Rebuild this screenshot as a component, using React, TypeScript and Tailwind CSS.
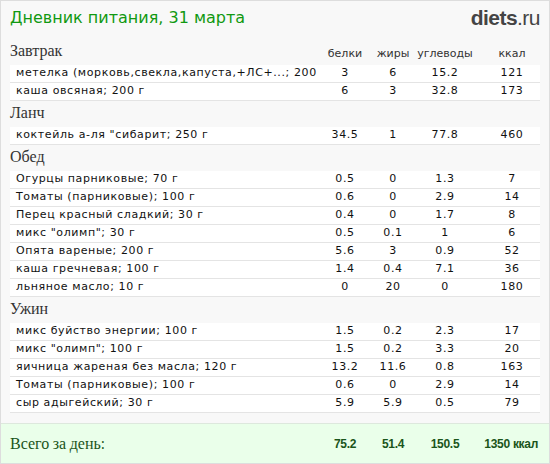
const sections: { title: string; rows: [string, string, string, string, string][] }[] = [
  {
    title: 'Завтрак',
    rows: [
      ['метелка (морковь,свекла,капуста,+ЛС+...; 200 г', '3', '6', '15.2', '121'],
      ['каша овсяная; 200 г', '6', '3', '32.8', '173'],
    ],
  },
  { title: 'Ланч', rows: [['коктейль а-ля "сибарит; 250 г', '34.5', '1', '77.8', '460']] },
  {
    title: 'Обед',
    rows: [
      ['Огурцы парниковые; 70 г', '0.5', '0', '1.3', '7'],
      ['Томаты (парниковые); 100 г', '0.6', '0', '2.9', '14'],
      ['Перец красный сладкий; 30 г', '0.4', '0', '1.7', '8'],
      ['микс "олимп"; 30 г', '0.5', '0.1', '1', '6'],
      ['Опята вареные; 200 г', '5.6', '3', '0.9', '52'],
      ['каша гречневая; 100 г', '1.4', '0.4', '7.1', '36'],
      ['льняное масло; 10 г', '0', '20', '0', '180'],
    ],
  },
  {
    title: 'Ужин',
    rows: [
      ['микс буйство энергии; 100 г', '1.5', '0.2', '2.3', '17'],
      ['микс "олимп"; 100 г', '1.5', '0.2', '3.3', '20'],
      ['яичница жареная без масла; 120 г', '13.2', '11.6', '0.8', '163'],
      ['Томаты (парниковые); 100 г', '0.6', '0', '2.9', '14'],
      ['сыр адыгейский; 30 г', '5.9', '5.9', '0.5', '79'],
    ],
  },
];

export default function App() {
  return (
    <div className="w-[550px] h-[464px] bg-[#f8f8f8] border border-[#dddddd] flex flex-col overflow-hidden font-[DejaVu_Sans]">
      <div className="flex justify-between items-center px-[9px] pt-[4px] h-[30px]">
        <span className="text-[#119911] text-[16px]">Дневник питания, 31 марта</span>
        <span className="text-[#444] text-[21px] font-[Liberation_Sans] tracking-tight">
          <b>diets</b>.ru
        </span>
      </div>
      <div className="flex-1 px-[9px] pt-[12px]">
        {sections.map((s, i) => (
          <div key={s.title}>
            <div className={`flex items-end pb-[2px] ${i ? 'h-[26px]' : 'h-[22px]'}`}>
              <span className="flex-1 text-[#333] text-[16px] font-serif">{s.title}</span>
              {i === 0 && (
                <div className="flex text-[11px] text-[#333] pb-[1px]">
                  <span className="w-[50px] text-center">белки</span>
                  <span className="w-[46px] text-center">жиры</span>
                  <span className="w-[58px] text-center">углеводы</span>
                  <span className="w-[66px] text-center pl-[10px]">ккал</span>
                </div>
              )}
            </div>
            {s.rows.map((r, j) => (
              <div key={j} className="flex items-center h-[18px] bg-white border-b border-[#e4e4e4] text-[11px] text-[#111] tracking-[0.6px]">
                <span className="flex-1 pl-[6px] whitespace-nowrap overflow-hidden">{r[0]}</span>
                <span className="w-[50px] text-center">{r[1]}</span>
                <span className="w-[46px] text-center">{r[2]}</span>
                <span className="w-[58px] text-center">{r[3]}</span>
                <span className="w-[66px] text-center pl-[10px]">{r[4]}</span>
              </div>
            ))}
          </div>
        ))}
      </div>
      <div className="h-[40px] bg-[#eaffea] border-t border-[#dde8dd] flex items-center px-[9px] text-[#1a551a]">
        <span className="flex-1 text-[16px] font-serif">Всего за день:</span>
        <div className="flex text-[12px] font-bold font-[Liberation_Sans] tracking-tight">
          <span className="w-[50px] text-center">75.2</span>
          <span className="w-[46px] text-center">51.4</span>
          <span className="w-[58px] text-center">150.5</span>
          <span className="w-[66px] text-right pr-[2px]">1350 ккал</span>
        </div>
      </div>
    </div>
  );
}
